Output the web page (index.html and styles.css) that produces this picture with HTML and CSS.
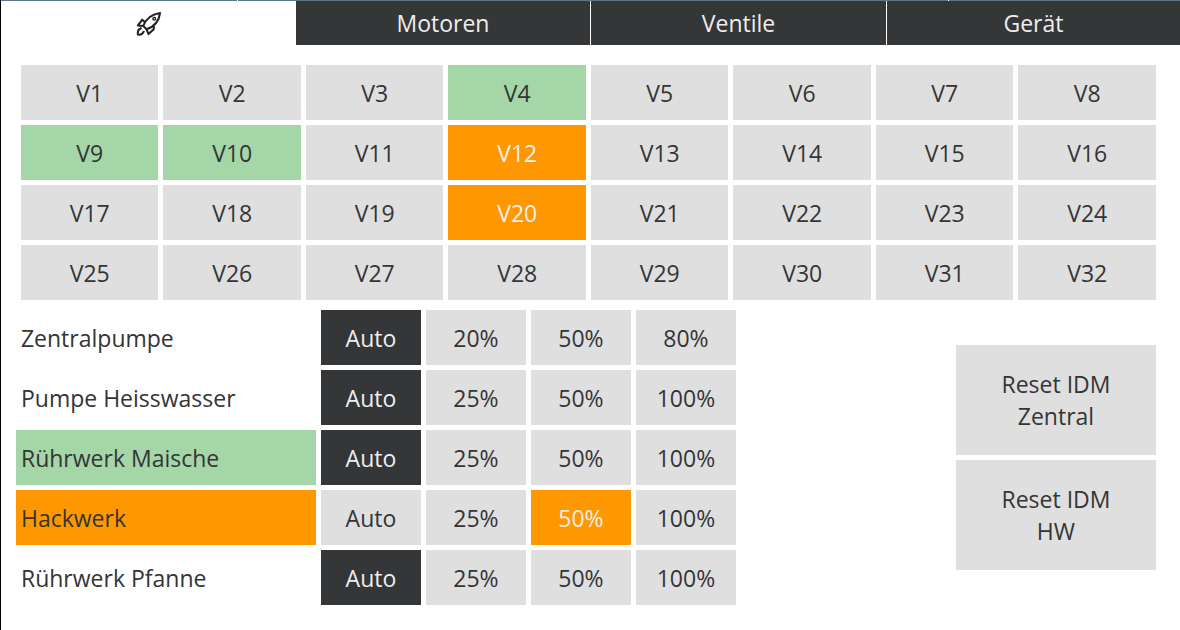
FILE: index.html
```html
<!DOCTYPE html>
<html lang="de">
<head>
    <meta charset="UTF-8">
    <meta name="viewport" content="width=device-width, initial-scale=1.0">
    <title>Steuerung</title>
    <link rel="stylesheet" href="styles.css">
</head>
<body>
    <div class="top-line"><span></span><span></span></div>
    <nav class="tabs">
        <div class="tab active">
            <svg class="rocket" viewBox="0 0 26 26" width="25" height="25" fill="none" stroke="#222" stroke-width="2.1" stroke-linejoin="round" stroke-linecap="round">
                <path d="M11 19 L7.5 15.5 C10 8.5 15.5 3.5 25 2 C24 11 18.5 16.5 11 19 Z"/>
                <path d="M9 11.5 L6.5 9 L2 15 L7.5 15.5"/>
                <path d="M18.5 16.5 L18.5 19 L13 24 L11 19"/>
                <circle cx="19" cy="8" r="1.4" stroke-width="1.5"/>
                <path d="M5 18 C2.5 19 1.5 21.5 2 24.5 C4.5 25 7 24 8 21.5"/>
            </svg>
        </div>
        <div class="tab">Motoren</div>
        <div class="tab">Ventile</div>
        <div class="tab">Gerät</div>
    </nav>

    <main class="content">
        <section class="valves">
            <div class="btn">V1</div>
            <div class="btn">V2</div>
            <div class="btn">V3</div>
            <div class="btn green">V4</div>
            <div class="btn">V5</div>
            <div class="btn">V6</div>
            <div class="btn">V7</div>
            <div class="btn">V8</div>
            <div class="btn green">V9</div>
            <div class="btn green">V10</div>
            <div class="btn">V11</div>
            <div class="btn orange">V12</div>
            <div class="btn">V13</div>
            <div class="btn">V14</div>
            <div class="btn">V15</div>
            <div class="btn">V16</div>
            <div class="btn">V17</div>
            <div class="btn">V18</div>
            <div class="btn">V19</div>
            <div class="btn orange">V20</div>
            <div class="btn">V21</div>
            <div class="btn">V22</div>
            <div class="btn">V23</div>
            <div class="btn">V24</div>
            <div class="btn">V25</div>
            <div class="btn">V26</div>
            <div class="btn">V27</div>
            <div class="btn">V28</div>
            <div class="btn">V29</div>
            <div class="btn">V30</div>
            <div class="btn">V31</div>
            <div class="btn">V32</div>
        </section>

        <section class="lower">
            <div class="motors">
                <div class="label">Zentralpumpe</div>
                <div class="btn dark">Auto</div>
                <div class="btn">20%</div>
                <div class="btn">50%</div>
                <div class="btn">80%</div>

                <div class="label">Pumpe Heisswasser</div>
                <div class="btn dark">Auto</div>
                <div class="btn">25%</div>
                <div class="btn">50%</div>
                <div class="btn">100%</div>

                <div class="label green">Rührwerk Maische</div>
                <div class="btn dark">Auto</div>
                <div class="btn">25%</div>
                <div class="btn">50%</div>
                <div class="btn">100%</div>

                <div class="label orange-label">Hackwerk</div>
                <div class="btn">Auto</div>
                <div class="btn">25%</div>
                <div class="btn orange">50%</div>
                <div class="btn">100%</div>

                <div class="label">Rührwerk Pfanne</div>
                <div class="btn dark">Auto</div>
                <div class="btn">25%</div>
                <div class="btn">50%</div>
                <div class="btn">100%</div>
            </div>

            <div class="resets">
                <div class="btn reset">Reset IDM<br>Zentral</div>
                <div class="btn reset">Reset IDM<br>HW</div>
            </div>
        </section>
    </main>
</body>
</html>
```

FILE: styles.css
```css
html, body {
    height: 100%;
}
body {
    margin: 0;
    width: 1180px;
    height: 630px;
    overflow: hidden;
    box-sizing: border-box;
    border-left: 1px solid #000;
    background-color: #fff;
    color: #333537;
    font-family: "Open Sans", sans-serif;
    font-size: 23px;
}
.top-line {
    height: 1px;
    margin-left: -1px;
    background-color: #5b7a87;
    display: flex;
    justify-content: space-between;
    padding: 0 231px 0 237px;
}
.top-line span {
    width: 1px;
    background-color: #fff;
}
.tabs {
    display: flex;
    height: 44px;
}
.tab {
    flex: 0 0 296px;
    display: flex;
    align-items: center;
    justify-content: center;
    background-color: #353638;
    color: #eee;
    border-left: 1px solid #fff;
    box-sizing: border-box;
}
.tab:nth-child(2) {
    flex-basis: 294px;
    border-left: none;
}
.tab.active {
    flex-basis: 295px;
    background-color: #fff;
    border-left: none;
}
.tab:last-child {
    flex: 1;
}
.content {
    padding: 20px 24.05px 0 19.95px;
}
.valves {
    display: grid;
    grid-template-columns: repeat(8, 1fr);
    grid-auto-rows: 55px;
    gap: 5px;
}
.btn {
    display: flex;
    align-items: center;
    justify-content: center;
    background-color: #dfdfdf;
}
.green {
    background-color: #a5d6a7;
}
.orange {
    background-color: #ff9800;
    color: #eee;
}
.dark {
    background-color: #353638;
    color: #eee;
}
.lower {
    display: flex;
    justify-content: space-between;
    margin-top: 10px;
}
.motors {
    display: grid;
    grid-template-columns: 300px repeat(4, 100px);
    grid-auto-rows: 55px;
    gap: 5px;
    margin-left: -5px;
}
.label {
    display: flex;
    align-items: center;
    padding-left: 5px;
}
.orange-label {
    background-color: #ff9800;
}
.resets {
    display: flex;
    flex-direction: column;
    gap: 5px;
    margin-top: 35px;
}
.reset {
    width: 200px;
    height: 110px;
    text-align: center;
    line-height: 32px;
}
```
